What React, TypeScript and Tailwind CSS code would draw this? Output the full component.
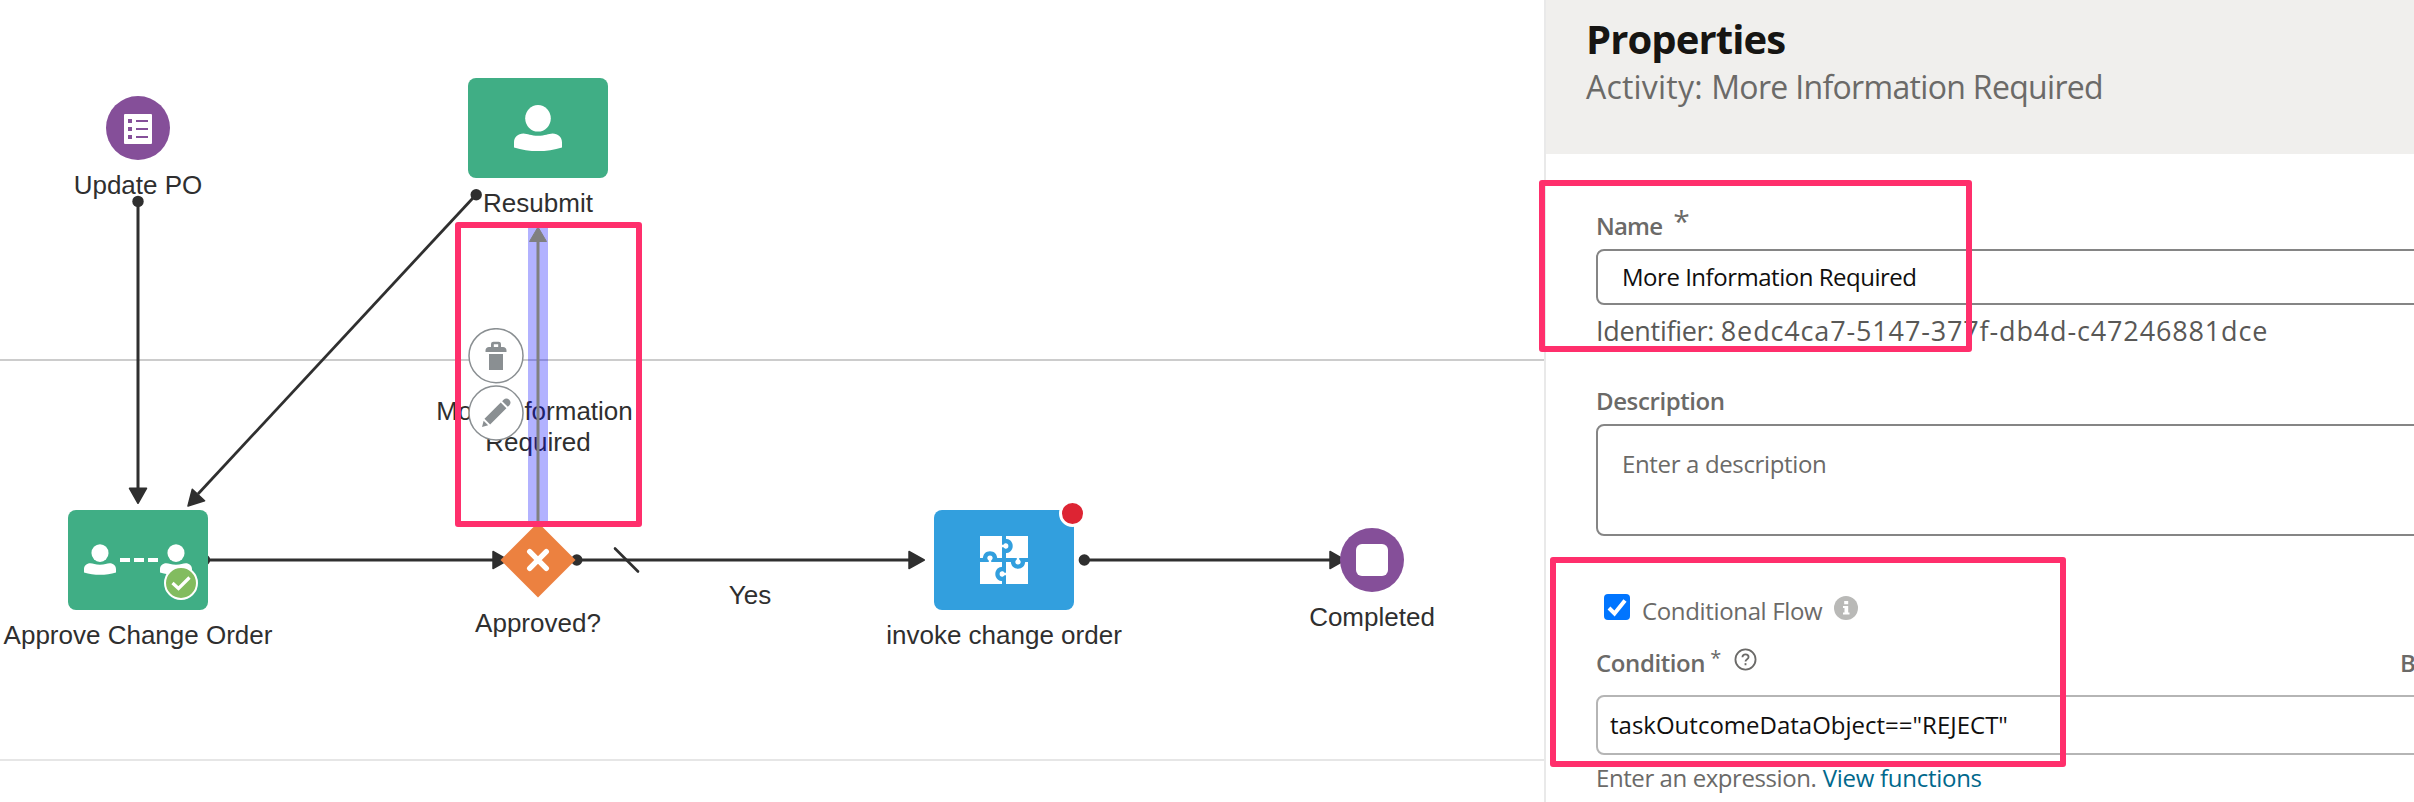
import type { ReactNode } from "react";

const INK = "#2f2f2f";

function Label({ cls, children }: { cls: string; children: ReactNode }) {
  return (
    <div className={`absolute flex justify-center whitespace-nowrap font-['Liberation_Sans',Arial,sans-serif] text-[26px] leading-8 text-[#2f2f2f] ${cls}`}>
      {children}
    </div>
  );
}

function Person({ className }: { className: string }) {
  return (
    <svg viewBox="0 0 48 46" className={className} fill="#fff">
      <ellipse cx="24" cy="13.3" rx="12.8" ry="13.3" />
      <path d="M0 42.4V37.5C0 32 4 28.5 9.5 28.5C13.5 28.6 17 30.8 24 30.8S34.5 28.6 38.5 28.5C44 28.5 48 32 48 37.5V42.4C33 47.2 15 47.2 0 42.4Z" />
    </svg>
  );
}

function Puzzle() {
  return (
    <svg viewBox="0 0 48 48" className="size-12">
      <rect width="48" height="48" fill="#fff" />
      <path d="M22 0h4v48h-4zM0 22h48v4H0z" fill="#329fde" />
      {[0, 90, 180, 270].map((angle) => (
        <g key={angle} transform={`rotate(${angle} 24 24)`}>
          <path d="M25 2.8C30 2.8 32.700 6 32.700 10S30 17.200 25 17.200Z" fill="#329fde" />
          <path d="M21.500 8.800L23.500 8.800C25 6.400 28.400 7 28.400 10S25 13.600 23.500 11.200L21.500 11.200Z" fill="#fff" />
        </g>
      ))}
    </svg>
  );
}

function Edges() {
  return (
    <svg viewBox="0 0 1544 802" className="absolute inset-0 h-[802px] w-[1544px]" fill={INK} stroke={INK} strokeLinejoin="round">
      <g strokeWidth="3" fill="none">
        <path d="M138 201V490M208 560H494M577 560H910M1084 560H1331" />
        <path d="M476 194.700L198 494" strokeWidth="2.800" />
        <path d="M615 548.500L638 571.500" strokeWidth="2.600" strokeLinecap="round" />
      </g>
      <g stroke="none">
        <circle cx="138" cy="201.400" r="5.700" />
        <circle cx="476.200" cy="194.700" r="5.700" />
        <circle cx="204.500" cy="560" r="5.700" />
        <circle cx="576.800" cy="560" r="5.700" />
        <circle cx="1084.300" cy="560" r="5.700" />
      </g>
      <g strokeWidth="1.500">
        <path d="M129.500 488.300H146.500L138 503.300Z" />
        <path d="M192.300 489.300L204.600 500.800L188 506Z" />
        <path d="M493 551.500V568.500L508 560Z" />
        <path d="M909 551.500V568.500L924.300 560Z" />
        <path d="M1330 551.500V568.500L1345 560Z" />
      </g>
    </svg>
  );
}

function Canvas() {
  return (
    <div className="relative flex h-full w-[1544px] shrink-0 flex-col overflow-hidden bg-white">
      <div className="h-[361px] shrink-0 border-b-2 border-[#cccccc]" />
      <div className="h-[400px] shrink-0 border-b-2 border-[#e6e6e6]" />
      <Edges />

      <div className="absolute left-[106px] top-24 flex size-16 items-center justify-center rounded-full bg-[#854f99]">
        <svg viewBox="0 0 28 30" className="h-[30px] w-7 translate-y-[1px]">
          <rect width="28" height="30" rx="1" fill="#fff" />
          <path d="M4 5h4v4H4zM4 13h4v4H4zM4 21h4v4H4zM12 6h12v2H12zM12 14h12v2H12zM12 22h12v2H12z" fill="#854f99" />
        </svg>
      </div>
      <Label cls="left-[38px] w-[200px] top-[169px]">Update PO</Label>

      <div className="absolute left-[468px] top-[78px] flex h-[100px] w-[140px] items-center justify-center rounded-lg bg-[#40ae85]">
        <Person className="h-[46px] w-12" />
      </div>
      <Label cls="left-[438px] w-[200px] top-[187px]">Resubmit</Label>

      <div className="absolute left-[68px] top-[510px] h-[100px] w-[140px] rounded-lg bg-[#40ae85]">
        <div className="flex items-center pl-4 pt-[34px]">
          <Person className="h-[31px] w-8" />
          <div className="ml-1 flex w-[38px] justify-between">
            <i className="h-1 w-2.5 bg-white" />
            <i className="h-1 w-2.5 bg-white" />
            <i className="h-1 w-2.5 bg-white" />
          </div>
          <Person className="ml-0.5 h-[31px] w-8" />
        </div>
        <svg viewBox="0 0 34 34" className="absolute left-24 top-14 size-[34px]">
          <circle cx="17" cy="17" r="16" fill="#82bc5f" stroke="#fff" strokeWidth="2" />
          <path d="M8.500 17L14.500 22.500L25.500 11.500" fill="none" stroke="#fff" strokeWidth="3.200" />
        </svg>
      </div>
      <Label cls="left-[-12px] w-[300px] top-[619px]">Approve Change Order</Label>

      <Label cls="left-[434.500px] w-[200px] top-[395px]">More Information</Label>
      <Label cls="left-[438px] w-[200px] top-[426px]">Required</Label>
      <svg viewBox="0 0 20 300" className="absolute left-[528px] top-[224px] h-[300px] w-5">
        <rect width="20" height="300" fill="#0000ff" opacity=".3" />
        <path d="M10 16V300" stroke="#808080" strokeWidth="3" />
        <path d="M1.500 17.500H18.500L10 3Z" fill="#808080" stroke="#808080" strokeLinejoin="round" />
      </svg>

      <svg viewBox="0 0 76 76" className="absolute left-[500px] top-[522px] size-[76px]">
        <path d="M38 .5L75.500 38L38 75.500L.5 38Z" fill="#ec8140" />
        <path d="M29.700 29.700L46.300 46.300M46.300 29.700L29.700 46.300" stroke="#fff" strokeWidth="5.400" strokeLinecap="round" />
      </svg>
      <Label cls="left-[438px] w-[200px] top-[607px]">Approved?</Label>
      <Label cls="left-[650px] w-[200px] top-[579px]">Yes</Label>

      <div className="absolute left-[934px] top-[510px] flex h-[100px] w-[140px] items-center justify-center rounded-lg bg-[#329fde]">
        <Puzzle />
        <span className="absolute -top-2.5 left-[124.500px] size-[27px] rounded-full border-[3px] border-white bg-[#dd2433]" />
      </div>
      <Label cls="left-[854px] w-[300px] top-[619px]">invoke change order</Label>

      <div className="absolute left-[1340px] top-[528px] flex size-16 items-center justify-center rounded-full bg-[#854f99]">
        <span className="size-8 rounded-[6px] bg-white" />
      </div>
      <Label cls="left-[1272px] w-[200px] top-[601px]">Completed</Label>

      <svg viewBox="0 0 56 56" className="absolute left-[468px] top-[328px] size-14">
        <circle cx="28" cy="27.700" r="27" fill="#fff" stroke="#8a8f92" strokeWidth="1.500" />
        <path fill="#8a8f92" fillRule="evenodd" d="M17.500 24V22.500C17.500 20.500 19 19 21 19H23V16.500C23 14.500 24 13.800 25.500 13.800H30.500C32 13.800 33 14.500 33 16.500V19H35C37 19 38.500 20.500 38.500 22.500V24ZM25.800 19H30.200V16.300H25.800ZM21 26H35V42H21Z" />
      </svg>
      <svg viewBox="0 0 56 56" className="absolute left-[468px] top-[385px] size-14">
        <circle cx="28" cy="28" r="27" fill="#fff" stroke="#8a8f92" strokeWidth="1.500" />
        <g transform="translate(14 42) rotate(-45)" fill="#8a8f92">
          <path d="M0 0L5.500 -3.200V3.200ZM7.500 -4H30.500V4H7.500ZM32.500 -4H34.500C37 -4 38.500 -2.500 38.500 0S37 4 34.500 4H32.500Z" />
        </g>
      </svg>
    </div>
  );
}

function Properties() {
  return (
    <div className="flex h-full min-w-0 flex-1 flex-col overflow-hidden whitespace-nowrap border-l-2 border-[#e9e9e9] bg-white font-['Open_Sans','Noto_Sans',sans-serif] text-2xl leading-8 text-[#6b6a68]">
      <header className="flex h-[154px] shrink-0 flex-col bg-[#f0efed] pl-10 pt-[15px]">
        <h1 className="h-12 text-[40px] font-bold leading-[48px] tracking-[-0.9px] text-[#161513]">Properties</h1>
        <h2 className="mt-1 h-10 text-[32px] leading-10">
          <span className="tracking-[0.2px]">Activity: </span>
          <span className="tracking-[-0.68px]">More Information Required</span>
        </h2>
      </header>
      <div className="flex flex-col pl-[50px]">
        <div className="mt-14 flex h-8 font-semibold">
          <label className="tracking-[-0.8px]">Name</label>
          <span className="ml-[11px] text-[30px] font-medium leading-[21px]">*</span>
        </div>
        <div className="mt-[7px] h-14 w-[1000px] rounded-lg border-2 border-[#858585] pl-6 leading-[52px] tracking-[-0.48px] text-[#100f0e]">More Information Required</div>
        <div className="mt-2 h-9 text-[27px] leading-9 text-[#595856]">
          <span className="tracking-[-0.3px]">Identifier: </span>
          <span className="tracking-[0.85px]">8edc4ca7-5147-377f-db4d-c47246881dce</span>
        </div>
        <label className="mt-9 h-8 font-semibold tracking-[-0.4px]">Description</label>
        <div className="mt-[7px] h-28 w-[1000px] rounded-lg border-2 border-[#858585] pl-6 pt-[22px] tracking-[-0.35px]">Enter a description</div>
        <div className="mt-[58px] flex h-8 items-start">
          <svg viewBox="0 0 26 26" className="ml-2 size-[26px]">
            <rect width="26" height="26" rx="4" fill="#0075ff" />
            <path d="M5 14L10.500 19.500L21 6.500" fill="none" stroke="#fff" strokeWidth="4" />
          </svg>
          <span className="ml-3 pt-px tracking-[-0.35px]">Conditional Flow</span>
          <svg viewBox="0 0 24 24" className="ml-3 mt-0.5 size-6">
            <circle cx="12" cy="12" r="12" fill="#b9b9b7" />
            <path d="M10.200 5h4v3.300h-4zM9 10h5.200v6.500H15.500v2H9v-2h1.500V12H9z" fill="#fff" />
          </svg>
        </div>
        <div className="mt-[21px] flex h-8 font-semibold">
          <label className="tracking-[-0.4px]">Condition</label>
          <span className="ml-[5px] text-xl font-normal leading-[22px]">*</span>
          <svg viewBox="0 0 24 24" className="ml-[13px] mt-px size-[23px]" fill="none" stroke="#6b6a68" strokeWidth="1.900">
            <circle cx="12" cy="12" r="10.500" />
            <path d="M8.800 9.600C8.900 7.700 10.200 6.700 12 6.700S15.200 7.800 15.200 9.500C15.200 11.700 12 11.800 12 14.200" />
            <path d="M12 15.800V18" />
          </svg>
          <span className="ml-auto w-[14px] tracking-[-2px]">B</span>
        </div>
        <div className="mt-4 h-[60px] w-[1000px] rounded-lg border-2 border-[#b5b5b5] pl-3 leading-[56px] text-[#100f0e]">taskOutcomeDataObject=="REJECT"</div>
        <div className="mt-[7px] h-8">
          <span className="tracking-[-0.42px]">Enter an expression.</span>{" "}
          <a className="tracking-[-0.27px] text-[#00688c]">View functions</a>
        </div>
      </div>
    </div>
  );
}

export default function App() {
  return (
    <div className="relative flex h-[802px] w-[2414px] overflow-hidden bg-white">
      <Canvas />
      <Properties />
      <div className="absolute left-[455px] top-[222px] h-[305px] w-[187px] rounded-[3px] border-[6px] border-[#ff2f6c]" />
      <div className="absolute left-[1539px] top-[180px] h-[172px] w-[433px] rounded-[3px] border-[6px] border-[#ff2f6c]" />
      <div className="absolute left-[1550px] top-[557px] h-[210px] w-[516px] rounded-[3px] border-[6px] border-[#ff2f6c]" />
    </div>
  );
}
